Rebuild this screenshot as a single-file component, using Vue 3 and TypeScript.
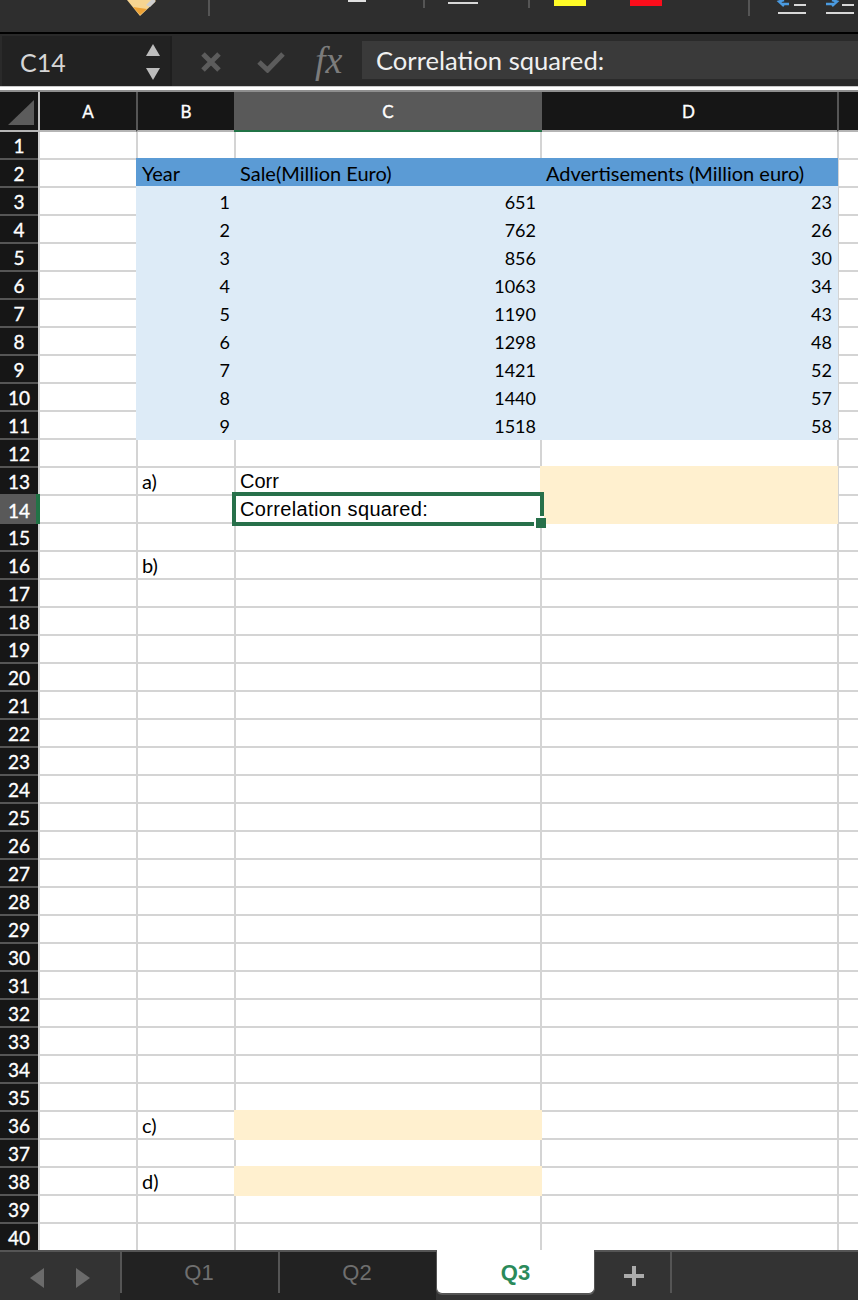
<script setup lang="ts">
interface Cell {
  text?: string
  cls?: string
  selected?: boolean
}

const sale = [651, 762, 856, 1063, 1190, 1298, 1421, 1440, 1518]
const ads = [23, 26, 30, 34, 43, 48, 52, 57, 58]

function cellsFor(row: number): Cell[] {
  const cells: Cell[] = [{}, {}, {}, {}, {}]
  if (row === 2) {
    cells[1] = { text: 'Year', cls: 'fill blue' }
    cells[2] = { text: 'Sale(Million Euro)', cls: 'fill blue' }
    cells[3] = { text: 'Advertisements (Million euro)', cls: 'fill blue wide-d' }
  }
  if (row >= 3 && row <= 11) {
    const i = row - 3
    cells[1] = { text: String(i + 1), cls: 'fill light num' }
    cells[2] = { text: String(sale[i]), cls: 'fill light num' }
    cells[3] = { text: String(ads[i]), cls: 'fill light num wide-d' }
  }
  if (row === 13) {
    cells[1] = { text: 'a)', cls: 'note' }
    cells[2] = { text: 'Corr', cls: 'arial' }
    cells[3] = { cls: 'fill cream wide-d' }
  }
  if (row === 14) {
    cells[2] = { text: 'Correlation squared:', cls: 'arial spaced', selected: true }
    cells[3] = { cls: 'fill cream wide-d' }
  }
  if (row === 16) cells[1] = { text: 'b)', cls: 'note' }
  if (row === 36) {
    cells[1] = { text: 'c)', cls: 'note' }
    cells[2] = { cls: 'fill cream' }
  }
  if (row === 38) {
    cells[1] = { text: 'd)', cls: 'note' }
    cells[2] = { cls: 'fill cream' }
  }
  return cells
}

const rows = Array.from({ length: 40 }, (_, i) => ({ n: i + 1, cells: cellsFor(i + 1) }))
const columns = ['A', 'B', 'C', 'D', '']
</script>

<template>
  <div class="app">
    <svg class="ribbon" width="858" height="32" viewBox="0 0 858 32">
      <polygon points="127,0 140,16 156,1 155,0" fill="#f6d491" />
      <polygon points="133,7 140,15 147,9" fill="#eda236" />
      <polygon points="146,5 151,0 155,0 155,2 150,7" fill="#cfcfcf" />
      <rect x="208" y="0" width="2" height="16" fill="#555" />
      <rect x="348" y="0" width="18" height="2" fill="#e0e0e0" />
      <rect x="423" y="0" width="2" height="8" fill="#555" />
      <rect x="448" y="2" width="30" height="2" fill="#d8d8d8" />
      <rect x="528" y="0" width="2" height="8" fill="#555" />
      <rect x="554" y="0" width="32" height="6" fill="#fffb27" />
      <rect x="630" y="0" width="32" height="6" fill="#fb0d1b" />
      <rect x="748" y="0" width="2" height="16" fill="#555" />
      <path d="M789 4H781M784 0L779 1.5L784 6" fill="none" stroke="#4a9ae0" stroke-width="2.4" />
      <rect x="794" y="4" width="12" height="2" fill="#d8d8d8" />
      <rect x="778" y="12" width="28" height="2" fill="#d8d8d8" />
      <path d="M826 4H835M832 0L837 1.5L832 6" fill="none" stroke="#4a9ae0" stroke-width="2.4" />
      <rect x="842" y="4" width="12" height="2" fill="#d8d8d8" />
      <rect x="826" y="12" width="28" height="2" fill="#d8d8d8" />
    </svg>

    <div class="formula">
      <div class="namebox">
        <span class="name">C14</span>
        <svg class="stepper" width="16" height="38" viewBox="0 0 16 38">
          <polygon points="8,1 15,13 1,13" fill="#bdbdbd" />
          <polygon points="1,25 15,25 8,37" fill="#bdbdbd" />
        </svg>
      </div>
      <svg class="glyph cancel" width="22" height="22" viewBox="0 0 22 22">
        <path d="M3 3L19 19M19 3L3 19" stroke="#5c5c5c" stroke-width="5" fill="none" />
      </svg>
      <svg class="glyph accept" width="28" height="22" viewBox="0 0 28 22">
        <path d="M2 11L10.500 19L26 3" stroke="#5c5c5c" stroke-width="5" fill="none" />
      </svg>
      <span class="fx">fx</span>
      <div class="input">Correlation squared:</div>
    </div>

    <div class="rule"></div>

    <div class="sheet">
      <div class="corner">
        <svg width="38" height="38" viewBox="0 0 38 38">
          <polygon points="8,33 34,8 34,33" fill="#5c5c5c" />
        </svg>
      </div>
      <div
        v-for="(c, i) in columns"
        :key="'h' + i"
        class="colhead"
        :class="{ active: c === 'C', first: i === 0, last: i === 4, sepb: i === 1 }"
      >{{ c }}</div>

      <template v-for="r in rows" :key="r.n">
        <div class="rowhead" :class="{ active: r.n === 14, top: r.n === 1 }">{{ r.n }}</div>
        <div
          v-for="(cell, ci) in r.cells"
          :key="ci"
          class="cell"
          :class="[cell.cls, { top: r.n === 1, selected: cell.selected }]"
        >
          <span v-if="cell.text" class="txt">{{ cell.text }}</span>
          <div v-if="cell.selected" class="selection"><i class="handle"></i></div>
        </div>
      </template>
    </div>

    <div class="tabs">
      <div class="nav">
        <svg width="60" height="20" viewBox="0 0 60 20">
          <polygon points="14,0 14,20 0,10" fill="#6b6b6b" />
          <polygon points="46,0 60,10 46,20" fill="#6b6b6b" />
        </svg>
      </div>
      <div class="tab">Q1</div>
      <div class="tab">Q2</div>
      <div class="tab current">Q3</div>
      <div class="add">
        <svg width="20" height="20" viewBox="0 0 20 20">
          <path d="M10 0V20M0 10H20" stroke="#ababab" stroke-width="4" fill="none" />
        </svg>
      </div>
      <div class="rest"></div>
    </div>
  </div>
</template>

<style scoped>
.app {
  width: 858px;
  height: 1300px;
  overflow: hidden;
  background: #2e2e2e;
  display: flex;
  flex-direction: column;
  font-family: Lato, "Open Sans", sans-serif;
}
.ribbon {
  display: block;
  flex: none;
  height: 32px;
  background: #2e2e2e;
}
.formula {
  flex: none;
  height: 54px;
  border-top: 2px solid #000;
  background: #2a2a2a;
  box-sizing: border-box;
  display: flex;
  align-items: center;
}
.namebox {
  width: 170px;
  height: 50px;
  margin: 2px 0 0 2px;
  background: #222;
  display: flex;
  align-items: center;
  justify-content: space-between;
  padding: 0 9px 0 18px;
  box-sizing: border-box;
  border-right: 2px solid #1e1e1e;
}
.name {
  color: #d6d6d6;
  font-size: 25px;
  margin-top: 2px;
}
.stepper {
  display: block;
  margin-top: 2px;
}
.glyph {
  display: block;
  margin-top: 4px;
  flex: none;
}
.cancel {
  margin-left: 28px;
}
.accept {
  margin-left: 35px;
}
.fx {
  margin-left: 30px;
  width: 33px;
  font-family: "Liberation Serif", serif;
  font-style: italic;
  font-size: 38px;
  line-height: 34px;
  color: #7c7c7c;
  flex: none;
}
.input {
  margin-left: 14px;
  flex: 1;
  height: 38px;
  background: #3a3a3a;
  color: #f0f0f0;
  font-size: 25.6px;
  line-height: 38px;
  padding-left: 14px;
  box-sizing: border-box;
  white-space: nowrap;
}
.rule {
  flex: none;
  height: 6px;
  box-sizing: border-box;
  background: #fff;
  border-top: 1px solid #c8c8c8;
  border-bottom: 2px solid #8e8e8e;
}
.sheet {
  flex: none;
  display: grid;
  grid-template-columns: 38px 98px 98px 306px 297px 21px;
  grid-template-rows: 40px 26px repeat(39, 28px);
  background: #fff;
}
.corner {
  background: #161616;
  border-bottom: 2px solid #b5b5b5;
}
.corner svg {
  display: block;
}
.colhead {
  box-sizing: border-box;
  background: #161616;
  color: #fff;
  font-size: 17px;
  -webkit-text-stroke: 0.35px #fff;
  display: flex;
  align-items: center;
  justify-content: center;
  border-bottom: 2px solid #b5b5b5;
}
.colhead.first {
  border-left: 2px solid #c4c4c4;
}
.colhead.sepb,
.colhead.last {
  border-left: 2px solid #555;
}
.colhead.active {
  background: #595959;
  border-bottom-color: #217346;
  margin-right: -2px;
  position: relative;
  z-index: 1;
}
.rowhead {
  box-sizing: border-box;
  background: #161616;
  color: #fff;
  font-size: 19px;
  -webkit-text-stroke: 0.35px #fff;
  display: flex;
  align-items: center;
  justify-content: center;
  border-top: 2px solid #555;
}
.rowhead.top {
  border-top: none;
}
.rowhead.active {
  background: #595959;
  border-top-color: #595959;
  margin-bottom: -2px;
  position: relative;
  z-index: 1;
}
.rowhead.active::after {
  content: "";
  position: absolute;
  top: -2px;
  bottom: 0;
  right: -2px;
  width: 4px;
  background: #217346;
}
.cell {
  box-sizing: border-box;
  border-left: 2px solid #d4d4d4;
  border-top: 2px solid #d4d4d4;
  color: #000;
  font-size: 18px;
  line-height: 26px;
  padding: 0 4px;
  white-space: nowrap;
  display: flex;
  align-items: center;
  min-width: 0;
}
.cell.top {
  border-top: none;
}
.txt {
  display: block;
}
.fill {
  position: relative;
  z-index: 1;
  border-color: transparent;
  margin-right: -2px;
}
.fill.wide-d {
  margin-right: -1px;
}
.blue {
  background: #5b9bd5;
  font-size: 20px;
}
.note {
  font-size: 20px;
}
.light,
.cream {
  margin-bottom: -2px;
}
.light {
  background: #ddebf7;
}
.cream {
  background: #fff0cf;
}
.num {
  justify-content: flex-end;
  padding-right: 6px;
}
.arial {
  font-family: "Liberation Sans", Arial, sans-serif;
  font-size: 20px;
}
.spaced {
  letter-spacing: 0.35px;
}
.selected {
  position: relative;
  z-index: 2;
}
.selection {
  position: absolute;
  inset: -4px;
  border: 4px solid #27704a;
  pointer-events: none;
}
.handle {
  position: absolute;
  right: -6px;
  bottom: -6px;
  width: 10px;
  height: 10px;
  background: #27704a;
  box-shadow: -2px -2px 0 #fff;
}
.tabs {
  flex: 1;
  display: flex;
  background: #333;
  border-top: 2px solid #555;
  box-sizing: border-box;
  position: relative;
}
.nav {
  width: 120px;
  flex: none;
  box-sizing: border-box;
  padding: 16px 0 0 30px;
}
.nav svg {
  display: block;
}
.tab {
  width: 158px;
  flex: none;
  box-sizing: border-box;
  background: #222;
  color: #6f6f6f;
  font-family: "Liberation Sans", Arial, sans-serif;
  font-size: 22px;
  text-align: center;
  line-height: 42px;
  background-image: linear-gradient(#555, #555);
  background-repeat: no-repeat;
  background-size: 2px 41px;
  background-position: 0 0;
}
.tab.current {
  width: 159px;
  height: 44px;
  margin-top: -2px;
  line-height: 46px;
  background: #fff;
  color: #2a8a5a;
  font-weight: 700;
  border: 1px solid #555;
  border-top: none;
  border-radius: 0 0 6px 6px;
  box-shadow: 0 1px 0 #555;
}
.add {
  width: 77px;
  flex: none;
  display: flex;
  justify-content: center;
  align-items: flex-start;
  padding: 14px 0 0 3px;
  box-sizing: border-box;
  border-right: 2px solid #555;
  height: 41px;
}
.add svg {
  display: block;
}
.rest {
  flex: 1;
}
</style>

<style>
html,
body {
  margin: 0;
  padding: 0;
  background: #2e2e2e;
}
</style>
